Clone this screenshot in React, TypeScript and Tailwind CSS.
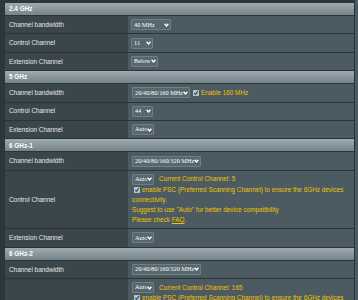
import React from "react";

function Chevron() {
  return (
    <svg width="5" height="4" viewBox="0 0 5 4" className="shrink-0">
      <path d="M0.6 0.7 L2.5 2.9 L4.4 0.7" fill="none" stroke="#ffffff" strokeWidth="1.4" />
    </svg>
  );
}

function Sel({ text, w }: { text: string; w: string }) {
  return (
    <div
      className={`${w} h-[11px] shrink-0 bg-[#56676d] border border-[#6e7f86] rounded-[1px] flex items-center justify-between pl-[2px] pr-[1px] overflow-hidden font-['Liberation_Serif',serif] text-[6.3px] leading-none text-white`}
    >
      <span className="whitespace-nowrap overflow-hidden">{text}</span>
      <Chevron />
    </div>
  );
}

function Check() {
  return (
    <svg width="6" height="6" viewBox="0 0 6 6" className="shrink-0 inline-block align-[-0.5px]">
      <rect x="0" y="0" width="6" height="6" rx="0.5" fill="#b8c4ca" />
      <path d="M1.3 3.1 L2.5 4.4 L4.9 1.1" fill="none" stroke="#2a4a5c" strokeWidth="1.1" />
    </svg>
  );
}

function Header({ title }: { title: string }) {
  return (
    <div className="h-[13px] border-b border-[#2a3337] bg-linear-to-b from-[#9eabb0] to-[#75848a] flex items-center pl-[4px] font-bold text-white text-[6.4px]">
      {title}
    </div>
  );
}

function Row({
  label,
  children,
  pl = "pl-[4px]",
}: {
  label: string;
  children: React.ReactNode;
  pl?: string;
}) {
  return (
    <div className="flex h-[18.4px] border-b border-[#2a3337]">
      <div className="w-[123px] shrink-0 bg-[#3a464b] flex items-center pl-[4px] text-[#e4e9eb]">{label}</div>
      <div className={`flex-1 bg-[#4b5b61] flex items-center ${pl}`}>{children}</div>
    </div>
  );
}

function MultiControl({ ch, full = true }: { ch: string; full?: boolean }) {
  return (
    <div className="flex border-b border-[#2a3337]">
      <div className="w-[123px] shrink-0 bg-[#3a464b] flex items-center pl-[4px] text-[#e4e9eb]">Control Channel</div>
      <div className="flex-1 bg-[#4b5b61] pl-[4px] pt-[3px] pb-[3px] text-[#f2c200] leading-[10px]">
        <div className="flex items-center h-[11px]">
          <Sel text="Auto" w="w-[22px]" />
          <span className="ml-[5px] whitespace-nowrap">Current Control Channel: {ch}</span>
        </div>
        <div className="flex items-center h-[10px] whitespace-nowrap">
          <span className="ml-[2px] mr-[1px] flex items-center">
            <Check />
          </span>
          <span className="ml-[1px]">enable PSC (Preferred Scanning Channel) to ensure the 6GHz devices</span>
        </div>
        {full && (
          <>
            <div className="h-[10px] whitespace-nowrap">connectivity.</div>
            <div className="h-[10.5px] whitespace-nowrap">Suggest to use "Auto" for better device compatibility</div>
            <div className="h-[10px] whitespace-nowrap">
              Please check <span className="underline">FAQ</span>.
            </div>
          </>
        )}
      </div>
    </div>
  );
}

export default function App() {
  return (
    <div className="w-[358px] h-[300px] overflow-hidden bg-[#2d363a] flex font-['Liberation_Sans',Arial,sans-serif] text-[6.4px]">
      <div className="w-[5px] shrink-0" />
      <div className="w-[349px] shrink-0 pt-[3px]">
        <Header title="2.4 GHz" />
        <Row label="Channel bandwidth" pl="pl-[3px]">
          <Sel text="40 MHz" w="w-[40px]" />
        </Row>
        <Row label="Control Channel" pl="pl-[3px]">
          <Sel text="11" w="w-[22px]" />
        </Row>
        <Row label="Extension Channel" pl="pl-[3px]">
          <Sel text="Below" w="w-[27px]" />
        </Row>

        <Header title="5 GHz" />
        <Row label="Channel bandwidth">
          <Sel text="20/40/80/160 MHz" w="w-[58px]" />
          <span className="ml-[3px] flex items-center">
            <Check />
          </span>
          <span className="ml-[2px] text-[#f2c200] whitespace-nowrap">Enable 160 MHz</span>
        </Row>
        <Row label="Control Channel">
          <Sel text="44" w="w-[21px]" />
        </Row>
        <Row label="Extension Channel">
          <Sel text="Auto" w="w-[22px]" />
        </Row>

        <Header title="6 GHz-1" />
        <Row label="Channel bandwidth">
          <Sel text="20/40/80/160/320 MHz" w="w-[69px]" />
        </Row>
        <MultiControl ch="5" />
        <Row label="Extension Channel">
          <Sel text="Auto" w="w-[22px]" />
        </Row>

        <Header title="6 GHz-2" />
        <Row label="Channel bandwidth">
          <Sel text="20/40/80/160/320 MHz" w="w-[69px]" />
        </Row>
        <MultiControl ch="165" />
      </div>
      <div className="w-[1px] shrink-0 bg-[#2a3337]" />
      <div className="flex-1 bg-[#4b5b61]" />
    </div>
  );
}
